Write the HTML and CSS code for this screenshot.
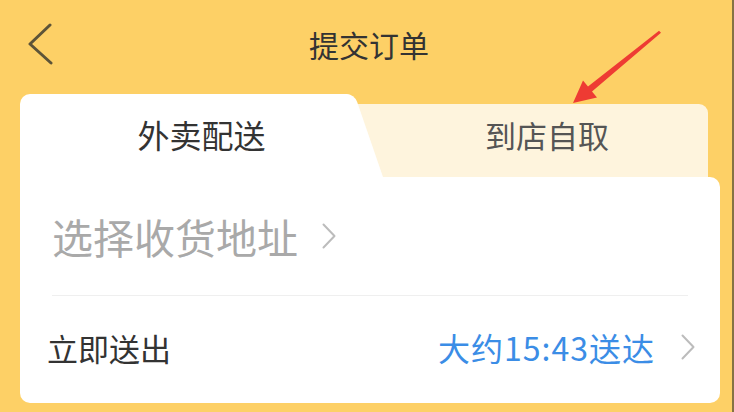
FILE: index.html
```html
<!DOCTYPE html>
<html lang="zh">
  <head>
    <meta charset="UTF-8" />
    <meta name="viewport" content="width=device-width, initial-scale=1.0" />
    <title>提交订单</title>
    <link rel="stylesheet" href="styles.css">
  </head>
  <body>
    <div class="page">
      <header class="topbar">
        <svg class="back" width="26" height="42" viewBox="0 0 26 42">
          <path d="M22 2 L2 21 L23 40" />
        </svg>
        <h1 class="title">提交订单</h1>
        <span></span>
      </header>

      <div class="card">
        <div class="tabs">
          <div class="tab tab-active">外卖配送</div>
          <div class="tab tab-other">到店自取</div>
        </div>
        <div class="panel">
          <div class="row addr">
            <span>选择收货地址</span>
            <svg class="more" width="14" height="26" viewBox="0 0 14 26">
              <path d="M1.5 1.5 L12.5 13 L1.5 24.5" />
            </svg>
          </div>
          <div class="row time">
            <span>立即送出</span>
            <span class="eta">
              大约15:43送达
              <svg class="more" width="14" height="26" viewBox="0 0 14 26">
                <path d="M1.5 1.5 L12.5 13 L1.5 24.5" />
              </svg>
            </span>
          </div>
        </div>
      </div>

      <!-- red annotation arrow -->
      <svg class="pointer" width="734" height="412" viewBox="0 0 734 412">
        <polygon points="573,103 597,97.5 592,91.5 661,32.8 659,30.8 588,86.5 583,80.5" />
      </svg>
    </div>
  </body>
</html>
```

FILE: styles.css
```css
body {
  margin: 0;
  background-color: #fdd066;
  font-family: "Noto Sans CJK SC", "Noto Sans", sans-serif;
}

.page {
  position: relative;
  width: 734px;
  height: 412px;
  overflow: hidden;
  box-shadow: inset -2px 0 0 #857342;
}

.topbar {
  display: grid;
  grid-template-columns: 80px 1fr 80px;
  align-items: center;
  height: 88px;
}

.back {
  margin-left: 28px;
}

.back path {
  fill: none;
  stroke: #5d5438;
  stroke-width: 3;
  stroke-linecap: round;
  stroke-linejoin: round;
}

.title {
  margin: 0;
  padding-left: 4px;
  font-size: 30px;
  font-weight: normal;
  line-height: 1;
  color: #333;
  text-align: center;
}

.card {
  margin: 6px 14px 0 20px;
}

.tabs {
  display: flex;
  align-items: flex-end;
  height: 83px;
}

.tab {
  display: flex;
  align-items: center;
  justify-content: center;
  box-sizing: border-box;
}

.tab-active {
  position: relative;
  z-index: 1;
  width: 335px;
  height: 83px;
  padding-left: 28px;
  padding-bottom: 4px;
  background-color: #fff;
  border-radius: 10px 10px 0 0;
  font-size: 32px;
  color: #333;
}

.tab-active::after {
  content: "";
  position: absolute;
  z-index: -1;
  top: 0;
  right: -28px;
  width: 44px;
  height: 100%;
  background-color: #fff;
  border-top-right-radius: 8px;
  transform: skewX(19deg);
  transform-origin: bottom left;
}

.tab-other {
  flex: 1;
  height: 73px;
  margin-left: -20px;
  margin-right: 12px;
  padding-left: 51px;
  padding-bottom: 12px;
  background-color: #fef4dd;
  border-radius: 0 9px 0 0;
  font-size: 31px;
  color: #555;
}

.panel {
  height: 226px;
  background-color: #fff;
  border-radius: 0 10px 10px 10px;
}

.row {
  display: flex;
  align-items: center;
}

.more path {
  fill: none;
  stroke: #bcbcbc;
  stroke-width: 2;
  stroke-linecap: round;
  stroke-linejoin: round;
}

.addr {
  gap: 24px;
  height: 118px;
  margin: 0 32px;
  border-bottom: 1px solid #efefef;
  font-size: 41px;
  color: #a9a9a9;
}

.time {
  justify-content: space-between;
  height: 102px;
  padding: 0 25px 0 27px;
  font-size: 31px;
  color: #333;
}

.eta {
  display: flex;
  align-items: center;
  gap: 26px;
  font-size: 32px;
  letter-spacing: 1px;
  color: #3b8de6;
}

.pointer {
  position: absolute;
  left: 0;
  top: 0;
  pointer-events: none;
}

.pointer polygon {
  fill: #ee3b33;
}
```
